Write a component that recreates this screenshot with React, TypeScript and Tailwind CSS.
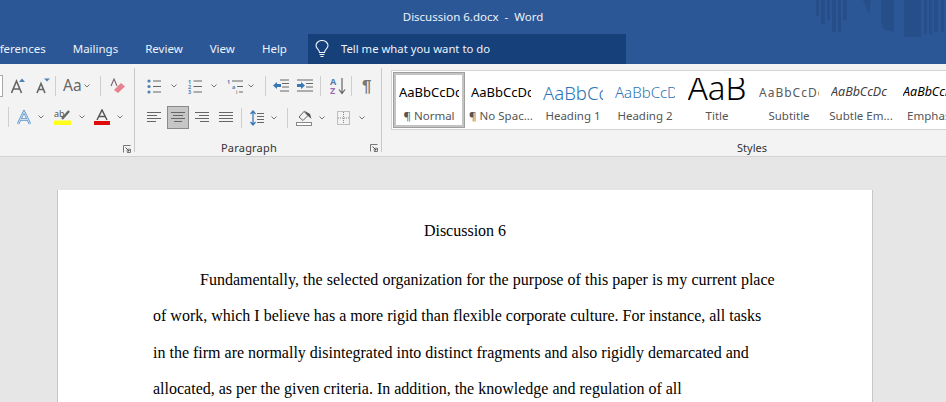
import React from "react";

const UI = "font-['Noto_Sans','Open_Sans',sans-serif]";
const BLUE = "#4f81b5";

function Svg({ w, h, className = "", children }: { w: number; h: number; className?: string; children: React.ReactNode }) {
  return (
    <svg width={w} height={h} viewBox={`0 0 ${w} ${h}`} className={`shrink-0 ${className}`} fill="none">
      {children}
    </svg>
  );
}

function Chev({ className = "" }: { className?: string }) {
  return (
    <Svg w={6} h={4} className={className}>
      <path d="M0.5 0.5 L3 3 L5.5 0.5" stroke="#777" strokeWidth="1" />
    </Svg>
  );
}

function Div({ className = "" }: { className?: string }) {
  return <div className={`w-px h-[20px] bg-[#cfcfcf] shrink-0 ${className}`} />;
}

function Launcher({ className = "" }: { className?: string }) {
  return (
    <Svg w={8} h={8} className={className}>
      <path d="M0.5 7.5 V0.5 H7.5 M4 1 V0.5 M7.5 4 V7.5 H4" stroke="#777" strokeWidth="1" />
      <path d="M2.5 2.5 L6 6 M6 3.5 V6 H3.5" stroke="#555" strokeWidth="1" />
    </Svg>
  );
}

function Lines({ w, rows, className = "" }: { w: number; rows: [number, number][]; className?: string }) {
  return (
    <Svg w={w} h={14} className={className}>
      {rows.map(([a, b], i) => (
        <path key={i} d={`M${a} ${i * 3 + 1.5} H${b}`} stroke="#666" strokeWidth="1" />
      ))}
    </Svg>
  );
}

const GrowA = ({ className = "", shrink = false }: { className?: string; shrink?: boolean }) => (
  <Svg w={14} h={16} className={className}>
    <path d={shrink ? "M1 15 L5 5.5 L9 15 M2.5 11.5 H7.5" : "M0.5 15 L5.5 3 L10.5 15 M2.5 11 H8.5"} stroke="#666" strokeWidth="1.6" />
    <path d={shrink ? "M8 0.5 H14 L11 3.5 Z" : "M8 4 H14 L11 0.5 Z"} fill={BLUE} />
  </Svg>
);

function Style({ label, selected, preview, children }: { label: string; selected?: boolean; preview: string; children: React.ReactNode }) {
  return (
    <div
      className={
        selected
          ? "w-[72px] h-[56px] shrink-0 border border-[#a0a0a0] bg-white outline-2 outline-[#c4c4c4] -outline-offset-3 flex flex-col items-center overflow-hidden"
          : "w-[72px] h-[56px] shrink-0 border border-transparent flex flex-col items-center overflow-hidden"
      }
    >
      <div className={`h-[35px] w-[60px] overflow-hidden flex items-center whitespace-nowrap ${preview}`}>{children}</div>
      <div className="text-[11.5px] leading-[16px] text-[#555] whitespace-nowrap">{label}</div>
    </div>
  );
}

export default function App() {
  return (
    <div className={`w-[946px] h-[402px] overflow-hidden bg-[#e6e6e6] flex flex-col ${UI}`}>
      {/* Title + tabs */}
      <div className="relative h-[64px] shrink-0 bg-[#2b5797] text-[#eef2f9] text-[11.5px] overflow-hidden">
        <svg width="130" height="38" viewBox="0 0 130 38" className="absolute top-0 right-0">
          <g fill="#24497f" opacity="0.6">
            <rect x="0" width="3" height="16" />
            <rect x="5" width="4" height="24" />
            <rect x="11" width="3" height="20" />
            <rect x="16" width="4" height="32" />
            <rect x="22" width="3" height="32" />
            <rect x="27" width="4" height="20" />
            <path d="M47 0 H55 L53 14 Z" />
            <path d="M65 0 H78 V32 L69 30 Q65 26 65 20 Z" />
            <rect x="88" width="17" height="37" />
            <rect x="108" width="3" height="34" />
            <rect x="113" width="3" height="34" />
            <rect x="118" width="4" height="32" />
            <rect x="125" width="3" height="32" />
          </g>
        </svg>
        <div className="relative h-[34px] flex items-center justify-center whitespace-pre">Discussion 6.docx  -  Word</div>
        <div className="relative h-[30px] flex items-center">
          <div className="flex items-center gap-[27px] ml-[-14px] whitespace-nowrap">
            <span>References</span>
            <span>Mailings</span>
            <span>Review</span>
            <span>View</span>
            <span>Help</span>
          </div>
          <div className="ml-[21px] w-[318px] h-[30px] bg-[#15407a] flex items-center">
            <svg width="14" height="18" viewBox="0 0 14 18" fill="none" className="ml-[7px] shrink-0">
              <path d="M4.5 12.5 C4.5 9.5 1 8.8 1 5.5 A6 5 0 0 1 13 5.5 C13 8.8 9.5 9.5 9.5 12.5 Z" stroke="#f0f4fa" strokeWidth="1.1" />
              <path d="M4.5 14.5 H9.5 M5.5 16.5 H8.5" stroke="#f0f4fa" strokeWidth="1.1" />
            </svg>
            <span className="ml-[12px] text-[11.3px] whitespace-nowrap">Tell me what you want to do</span>
          </div>
        </div>
      </div>

      {/* Ribbon */}
      <div className="h-[93px] shrink-0 bg-[#f3f3f3] border-b border-[#d2d2d2] flex overflow-hidden">
        {/* Font group */}
        <div className="w-[134px] shrink-0 flex flex-col pt-[11px]">
          <div className="h-[22px] flex items-center">
            <div className="w-[3px] h-[22px] bg-white border-y border-r border-[#a8a8a8] shrink-0" />
            <GrowA className="ml-[8px]" />
            <GrowA shrink className="ml-[11px]" />
            <Div className="ml-[5px]" />
            <span className="ml-[7px] w-[16px] text-[15.5px] leading-none text-[#666] whitespace-nowrap">Aa</span>
            <Chev className="ml-[5px]" />
            <Div className="ml-[10px]" />
            <Svg w={15} h={16} className="ml-[9px]">
              <path d="M1 8 L4 1 L7 8" stroke="#7a6470" strokeWidth="1.1" />
              <path d="M4 12 L11 5 L15 8.5 L8 15 Z" fill="#e8828f" />
            </Svg>
          </div>
          <div className="mt-[9px] h-[22px] flex items-center">
            <Div className="ml-[8px]" />
            <Svg w={14} h={15} className="ml-[8px]">
              <path d="M1 14 L7 1.5 L13 14 M3.5 9.5 H10.5" stroke="#5b93c9" strokeWidth="2.4" />
              <path d="M1 14 L7 1.5 L13 14 M3.5 9.5 H10.5" stroke="#eaf2fa" strokeWidth="0.8" />
            </Svg>
            <Chev className="ml-[7px]" />
            <Svg w={17} h={16} className="ml-[10px]">
              <text x="0" y="8" fontSize="9" fill="#555" fontFamily="Noto Sans">ab</text>
              <path d="M8 10 L15 2" stroke="#666" strokeWidth="2.4" />
              <rect x="0" y="11.5" width="17" height="4.5" fill="#ffff1a" />
            </Svg>
            <Chev className="ml-[8px]" />
            <Svg w={16} h={16} className="ml-[9px]">
              <path d="M3 11 L8 1 L13 11 M5 7.5 H11" stroke="#555" strokeWidth="1.5" />
              <rect x="0" y="12" width="16" height="4" fill="#e00b0b" />
            </Svg>
            <Chev className="ml-[7px]" />
          </div>
          <div className="mt-[17px] flex justify-end pr-[3px]">
            <Launcher />
          </div>
        </div>
        <div className="w-px h-[84px] mt-[4px] bg-[#c8c8c8] shrink-0" />

        {/* Paragraph group */}
        <div className="w-[246px] shrink-0 flex flex-col pt-[11px]">
          <div className="h-[22px] flex items-center">
            <Svg w={14} h={15} className="ml-[12px]">
              <circle cx="2" cy="2" r="1.6" fill={BLUE} />
              <circle cx="2" cy="7.5" r="1.6" fill={BLUE} />
              <circle cx="2" cy="13" r="1.6" fill={BLUE} />
              <path d="M6 2 H14 M6 7.5 H14 M6 13 H14" stroke="#666" />
            </Svg>
            <Chev className="ml-[10px]" />
            <Svg w={14} h={15} className="ml-[11px]">
              <text x="0" y="5" fontSize="5.5" fill={BLUE} fontWeight="700" fontFamily="Noto Sans">1</text>
              <text x="0" y="10" fontSize="5.5" fill={BLUE} fontWeight="700" fontFamily="Noto Sans">2</text>
              <text x="0" y="15" fontSize="5.5" fill={BLUE} fontWeight="700" fontFamily="Noto Sans">3</text>
              <path d="M5.5 2 H14 M5.5 7.5 H14 M5.5 13 H14" stroke="#666" />
            </Svg>
            <Chev className="ml-[9px]" />
            <Svg w={16} h={15} className="ml-[10px]">
              <text x="0" y="5" fontSize="5.5" fill={BLUE} fontWeight="700" fontFamily="Noto Sans">1</text>
              <text x="5" y="10" fontSize="5.5" fill={BLUE} fontWeight="700" fontFamily="Noto Sans">a</text>
              <text x="9" y="15" fontSize="5.5" fill="#555" fontFamily="Noto Sans">i</text>
              <path d="M5 2 H16 M10 7.5 H16 M12 13 H16" stroke="#666" />
            </Svg>
            <Chev className="ml-[5px]" />
            <Div className="ml-[11px]" />
            <Svg w={16} h={14} className="ml-[7px]">
              <path d="M7 1 H16 M9 4.5 H16 M9 8 H16 M7 12 H16" stroke="#666" />
              <path d="M0 6.5 L4 3 V5 H8 V8 H4 V10 Z" fill="#3a78b5" />
            </Svg>
            <Svg w={16} h={14} className="ml-[8px]">
              <path d="M0 1 H16 M9 4.5 H16 M9 8 H16 M0 12 H16" stroke="#666" />
              <path d="M8 6.5 L4 3 V5 H0 V8 H4 V10 Z" fill="#3a78b5" />
            </Svg>
            <Div className="ml-[7px]" />
            <Svg w={16} h={18} className="ml-[9px]">
              <text x="0" y="8" fontSize="9" fontWeight="700" fill={BLUE} fontFamily="Noto Sans">A</text>
              <text x="0" y="17" fontSize="9" fontWeight="700" fill="#9a6bb5" fontFamily="Noto Sans">Z</text>
              <path d="M12 1 V16 M9 12.5 L12 16.5 L15 12.5" stroke="#666" strokeWidth="1.2" />
            </Svg>
            <Div className="ml-[5px]" />
            <span className="ml-[10px] text-[17px] leading-none text-[#777] font-['Liberation_Sans',sans-serif] font-bold">¶</span>
          </div>
          <div className="mt-[9px] h-[23px] flex items-center">
            <Lines w={14} rows={[[0, 14], [0, 10], [0, 14], [0, 9]]} className="ml-[12px]" />
            <div className="ml-[6px] w-[22px] h-[23px] bg-[#c6c6c6] border border-[#8a8a8a] flex items-center justify-center shrink-0">
              <Lines w={14} rows={[[0, 14], [2, 12], [0, 14], [3, 11]]} />
            </div>
            <Lines w={14} rows={[[0, 14], [4, 14], [0, 14], [5, 14]]} className="ml-[6px]" />
            <Lines w={14} rows={[[0, 14], [0, 14], [0, 14], [0, 14]]} className="ml-[10px]" />
            <Div className="ml-[8px]" />
            <Svg w={14} h={16} className="ml-[8px]">
              <path d="M3 1 V15 M0.5 4 L3 1 L5.5 4 M0.5 12 L3 15 L5.5 12" stroke="#3a78b5" strokeWidth="1.3" />
              <path d="M7 3.5 H14 M7 6.5 H14 M7 9.5 H14 M7 12.5 H14" stroke="#666" />
            </Svg>
            <Chev className="ml-[7px]" />
            <Div className="ml-[10px]" />
            <Svg w={16} h={16} className="ml-[8px]">
              <path d="M3 7 L8 1.5 L12 5.5 L7 10.5 Z" stroke="#666" />
              <path d="M8 0.5 L14 4 L15.5 9 L11.5 5.5 Z" fill="#555" />
              <rect x="0.5" y="12.5" width="15" height="3" stroke="#888" fill="#fff" />
            </Svg>
            <Chev className="ml-[7px]" />
            <Svg w={13} h={14} className="ml-[12px]">
              <rect x="0.5" y="0.5" width="12" height="13" stroke="#888" strokeDasharray="1 1" />
              <path d="M6.5 1 V13 M1 7 H12" stroke="#888" strokeDasharray="1 1" />
            </Svg>
            <Chev className="ml-[9px]" />
          </div>
          <div className="mt-[11px] flex items-center">
            <div className="w-[228px] text-center text-[11px] leading-[16px] text-[#333] tracking-[0.2px]">Paragraph</div>
            <Launcher className="ml-[7px]" />
          </div>
        </div>
        <div className="w-px h-[84px] mt-[4px] bg-[#c8c8c8] shrink-0" />

        {/* Styles group */}
        <div className="w-[740px] shrink-0 flex flex-col pt-[6px]">
          <div className="ml-[9px] h-[60px] bg-white border-y border-l border-[#d4d4d4] flex pl-px py-px">
            <Style label="¶ Normal" selected preview="pt-[4px] text-[13px] text-black">AaBbCcDc</Style>
            <Style label="¶ No Spac..." preview="pt-[4px] text-[13px] text-black">AaBbCcDc</Style>
            <Style label="Heading 1" preview="pt-[4px] text-[18.5px] font-light text-[#2e74b5]">AaBbCcDc</Style>
            <Style label="Heading 2" preview="pt-[4px] text-[15px] font-light text-[#2e74b5]">AaBbCcDc</Style>
            <Style label="Title" preview="justify-center text-[33px] leading-none font-light text-black">
              <span className="h-[26px] overflow-hidden flex items-end">AaB</span>
            </Style>
            <Style label="Subtitle" preview="pt-[4px] text-[12px] tracking-[1px] text-[#5a5a5a]">AaBbCcDc</Style>
            <Style label="Subtle Em..." preview="pt-[4px] text-[12.5px] italic text-[#404040]">AaBbCcDc</Style>
            <Style label="Emphasis" preview="pt-[4px] text-[12.5px] italic text-black">AaBbCcDc</Style>
          </div>
          <div className="mt-[10px] text-center text-[11px] leading-[16px] text-[#333]">Styles</div>
        </div>
      </div>

      {/* Document */}
      <div className="flex-1 pt-[33px] pl-[57px]">
        <div className="w-[816px] h-[300px] bg-white border-x border-[#c6c6c6] pt-[23px] pl-[95px] font-['Liberation_Serif',serif] text-[16px] leading-[36.5px] text-black whitespace-nowrap">
          <div className="w-[624px] text-center mb-[12px]">Discussion 6</div>
          <div className="indent-[47px] [word-spacing:0.15px]">Fundamentally, the selected organization for the purpose of this paper is my current place</div>
          <div>of work, which I believe has a more rigid than flexible corporate culture. For instance, all tasks</div>
          <div>in the firm are normally disintegrated into distinct fragments and also rigidly demarcated and</div>
          <div>allocated, as per the given criteria. In addition, the knowledge and regulation of all</div>
        </div>
      </div>
    </div>
  );
}
